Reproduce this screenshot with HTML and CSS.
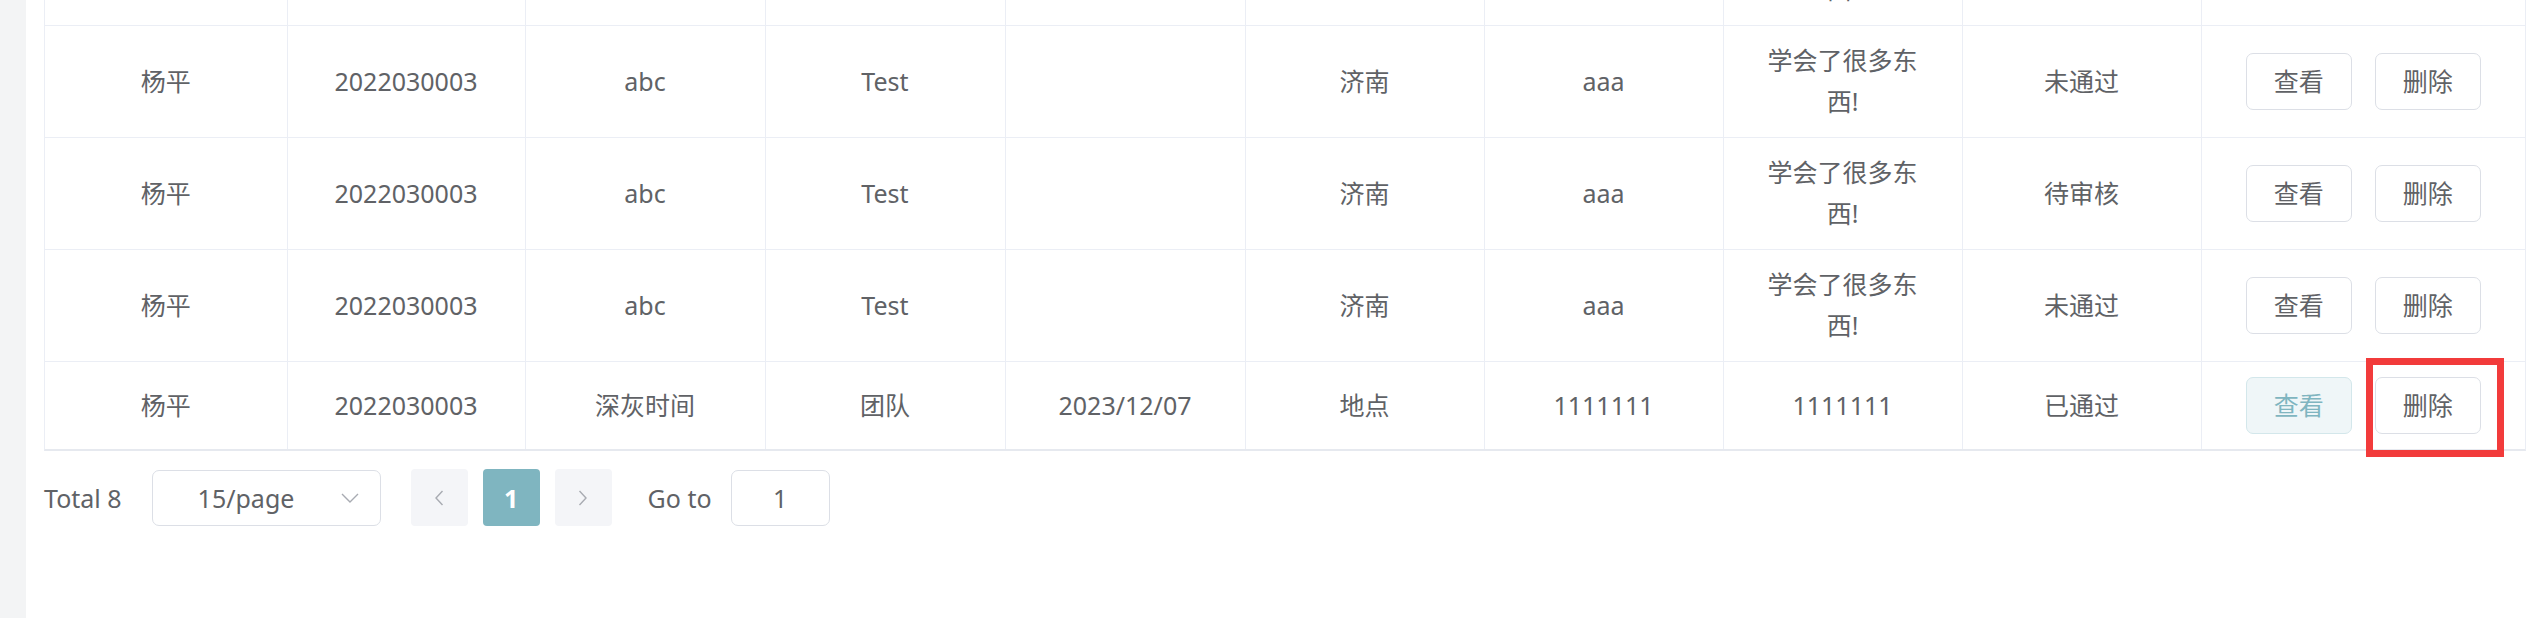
FILE: index.html
```html
<!DOCTYPE html>
<html lang="zh-CN">
<head>
<meta charset="utf-8">
<title>列表</title>
<link rel="stylesheet" href="styles.css">
</head>
<body>
<div class="layout">
  <aside class="sidebar"></aside>
  <main class="main">
    <div class="table-wrap">
      <table class="data-table">
        <colgroup>
          <col class="c1"><col class="c2"><col class="c3"><col class="c3"><col class="c3">
          <col class="c4"><col class="c4"><col class="c4"><col class="c4"><col class="c-ops">
        </colgroup>
        <tbody>
          <tr class="partial-row">
            <td></td><td></td><td></td><td></td><td></td>
            <td></td><td></td><td>学会了很多东西!</td><td></td>
            <td></td>
          </tr>
          <tr>
            <td>杨平</td><td>2022030003</td><td>abc</td><td>Test</td><td></td>
            <td>济南</td><td>aaa</td><td>学会了很多东西!</td><td>未通过</td>
            <td><div class="ops"><button class="btn">查看</button><button class="btn">删除</button></div></td>
          </tr>
          <tr>
            <td>杨平</td><td>2022030003</td><td>abc</td><td>Test</td><td></td>
            <td>济南</td><td>aaa</td><td>学会了很多东西!</td><td>待审核</td>
            <td><div class="ops"><button class="btn">查看</button><button class="btn">删除</button></div></td>
          </tr>
          <tr>
            <td>杨平</td><td>2022030003</td><td>abc</td><td>Test</td><td></td>
            <td>济南</td><td>aaa</td><td>学会了很多东西!</td><td>未通过</td>
            <td><div class="ops"><button class="btn">查看</button><button class="btn">删除</button></div></td>
          </tr>
          <tr class="last-row">
            <td>杨平</td><td>2022030003</td><td>深灰时间</td><td>团队</td><td>2023/12/07</td>
            <td>地点</td><td>1111111</td><td>1111111</td><td>已通过</td>
            <td><div class="ops"><button class="btn btn-hover">查看</button><button class="btn btn-marked">删除</button></div></td>
          </tr>
        </tbody>
      </table>
    </div>

    <div class="pagination">
      <span class="total">Total 8</span>
      <div class="sizes">
        <span class="sizes-text">15/page</span>
        <svg class="sizes-arrow" width="18" height="10" viewBox="0 0 18 10"><path d="M1 1 L9 9 L17 1" fill="none" stroke="#a8abb2" stroke-width="1.4"/></svg>
      </div>
      <button class="pager-btn"><svg width="10" height="16" viewBox="0 0 10 16"><path d="M8.5 1 L2 8 L8.5 15" fill="none" stroke="#a8abb2" stroke-width="1.4"/></svg></button>
      <button class="pager-btn active">1</button>
      <button class="pager-btn"><svg width="10" height="16" viewBox="0 0 10 16"><path d="M1.5 1 L8 8 L1.5 15" fill="none" stroke="#a8abb2" stroke-width="1.4"/></svg></button>
      <span class="goto">Go to</span>
      <div class="goto-input">1</div>
    </div>
  </main>
</div>
</body>
</html>
```

FILE: styles.css
```css
html, body {
  margin: 0;
  padding: 0;
  height: 100%;
  overflow: hidden;
  background: #fff;
}

body {
  font-family: "Noto Sans", "Noto Sans CJK SC", sans-serif;
  font-size: 25px;
  color: #606266;
}

.layout {
  display: flex;
  height: 618px;
}

.sidebar {
  flex: none;
  width: 26px;
  background: #f3f4f5;
}

.main {
  flex: 1;
  min-width: 0;
  padding: 0 15px 0 18px;
}

.table-wrap {
  margin-top: -87px;
  border: 1px solid #ebeef5;
  border-bottom: 2px solid #e6e9ef;
}

.data-table {
  width: 100%;
  border-collapse: collapse;
  table-layout: fixed;
}

.c1 { width: 242px; }
.c2 { width: 238px; }
.c3 { width: 240px; }
.c4 { width: 239px; }
.c-ops { width: 324px; }

.data-table td {
  padding: 14px 32px 15px;
  line-height: 41px;
  text-align: center;
  vertical-align: middle;
  border-right: 1px solid #ebeef5;
  border-bottom: 1px solid #ebeef5;
  word-break: break-all;
}

.data-table td:last-child {
  border-right: none;
  padding-left: 0;
  padding-right: 0;
}

.data-table .last-row td {
  border-bottom: none;
  padding: 15px 32px;
}

.data-table .last-row td:last-child {
  padding-left: 0;
  padding-right: 0;
}

.ops {
  display: flex;
  justify-content: center;
  gap: 23px;
}

.btn {
  box-sizing: border-box;
  display: inline-flex;
  align-items: center;
  justify-content: center;
  height: 57px;
  padding: 0 27px;
  border: 1px solid #dcdfe6;
  border-radius: 7px;
  background: #fff;
  color: #606266;
  font-family: inherit;
  font-size: 25px;
  line-height: 1;
}

.btn-hover {
  background: #eff6f8;
  border-color: #d3e7eb;
  color: #7fb5c0;
}

.btn-marked {
  position: relative;
}

.btn-marked::after {
  content: "";
  position: absolute;
  left: -10px;
  right: -24px;
  top: -20px;
  bottom: -24px;
  border: 7px solid #f23b3b;
  pointer-events: none;
}

.pagination {
  display: flex;
  align-items: center;
  height: 57px;
  margin-top: 18px;
}

.total {
  margin-right: 30px;
}

.sizes {
  box-sizing: border-box;
  display: flex;
  align-items: center;
  width: 229px;
  height: 56px;
  border: 1px solid #dcdfe6;
  border-radius: 7px;
  padding: 0 21px 0 45px;
  margin-right: 30px;
}

.sizes-text {
  flex: 1;
  text-align: left;
}

.sizes-arrow {
  flex: none;
}

.pager-btn {
  box-sizing: border-box;
  display: inline-flex;
  align-items: center;
  justify-content: center;
  width: 57px;
  height: 57px;
  margin-right: 15px;
  border: none;
  border-radius: 4px;
  background: #f4f5f8;
  color: #606266;
  font-family: inherit;
  font-size: 25px;
  padding: 0;
}

.pager-btn.active {
  background: #7fb5c0;
  color: #fff;
  font-weight: 700;
}

.goto {
  margin-left: 21px;
  margin-right: 19px;
}

.goto-input {
  box-sizing: border-box;
  display: flex;
  align-items: center;
  justify-content: center;
  width: 99px;
  height: 56px;
  border: 1px solid #dcdfe6;
  border-radius: 7px;
}
```
